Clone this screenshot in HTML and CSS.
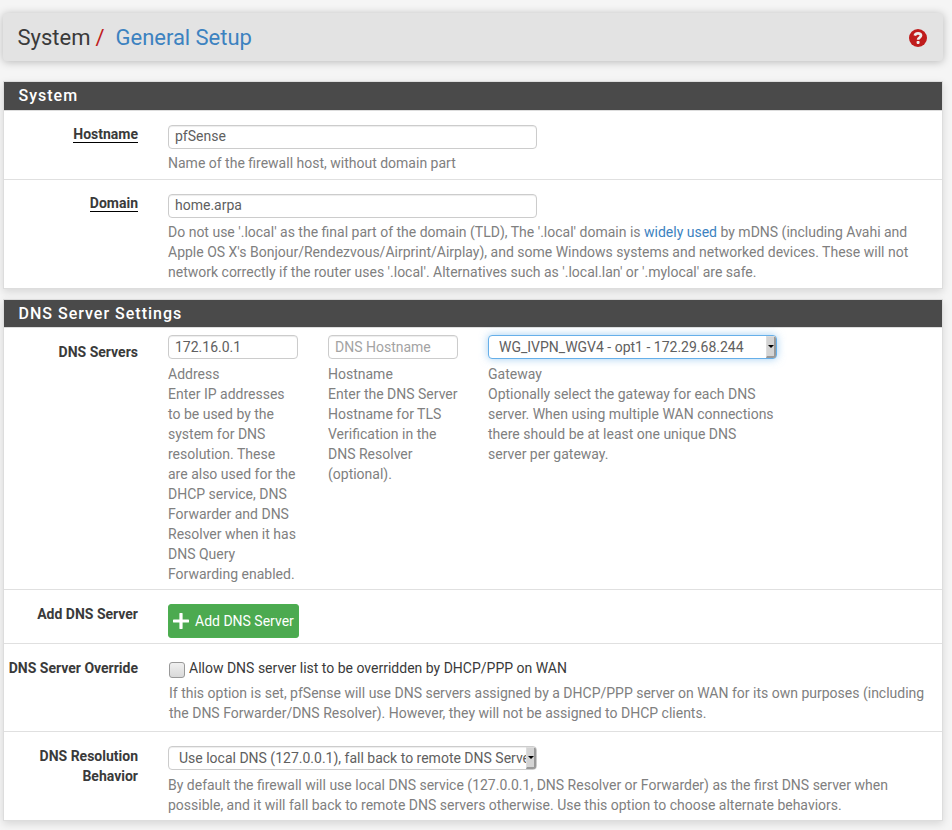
FILE: index.html
```html
<!DOCTYPE html>
<html lang="en">
<head>
<meta charset="utf-8">
<title>System: General Setup</title>
<link rel="stylesheet" href="styles.css">
</head>
<body>
<header class="page-header">
  <h1 class="breadcrumb"><span>System</span><span class="slash">/</span><a href="#">General Setup</a></h1>
  <a class="help-icon" href="#" aria-label="Help">
    <svg width="18" height="18" viewBox="0 0 18 18"><circle cx="9" cy="9" r="9" fill="#c01c1c"/><path d="M5.800 6.600C6.300 5 7.300 4.300 9 4.300c1.800 0 3 .9 3 2.300 0 2-2.900 1.900-2.900 4.100" fill="none" stroke="#eee" stroke-width="2.700"/><rect x="7.600" y="11.900" width="3" height="3" rx=".8" fill="#eee"/></svg>
  </a>
</header>

<section class="panel">
  <h2 class="panel-heading">System</h2>
  <div class="row row-host">
    <label class="label"><span class="required">Hostname</span></label>
    <div class="field">
      <div class="control wide raised">pfSense</div>
      <p class="help">Name of the firewall host, without domain part</p>
    </div>
  </div>
  <div class="row row-domain">
    <label class="label"><span class="required">Domain</span></label>
    <div class="field">
      <div class="control wide raised">home.arpa</div>
      <p class="help">Do not use '.local' as the final part of the domain (TLD), The '.local' domain is <a href="#">widely used</a> by mDNS (including Avahi and<br>Apple OS X's Bonjour/Rendezvous/Airprint/Airplay), and some Windows systems and networked devices. These will not<br>network correctly if the router uses '.local'. Alternatives such as '.local.lan' or '.mylocal' are safe.</p>
    </div>
  </div>
</section>

<section class="panel">
  <h2 class="panel-heading short">DNS Server Settings</h2>
  <div class="row row-servers">
    <label class="label">DNS Servers</label>
    <div class="field columns">
      <div>
        <div class="control">172.16.0.1</div>
        <p class="help">Address<br>Enter IP addresses<br>to be used by the<br>system for DNS<br>resolution. These<br>are also used for the<br>DHCP service, DNS<br>Forwarder and DNS<br>Resolver when it has<br>DNS Query<br>Forwarding enabled.</p>
      </div>
      <div>
        <div class="control placeholder">DNS Hostname</div>
        <p class="help">Hostname<br>Enter the DNS Server<br>Hostname for TLS<br>Verification in the<br>DNS Resolver<br>(optional).</p>
      </div>
      <div>
        <div class="control select focused"><span class="value">WG_IVPN_WGV4 - opt1 - 172.29.68.244</span><span class="arrow"></span></div>
        <p class="help">Gateway<br>Optionally select the gateway for each DNS<br>server. When using multiple WAN connections<br>there should be at least one unique DNS<br>server per gateway.</p>
      </div>
    </div>
  </div>
  <div class="row row-add">
    <label class="label">Add DNS Server</label>
    <div class="field">
      <button class="add-button" type="button"><svg width="16" height="16" viewBox="0 0 16 16"><path d="M8 1v14M1 8h14" stroke="#fff" stroke-width="3.200" stroke-linecap="round"/></svg><span>Add DNS Server</span></button>
    </div>
  </div>
  <div class="row row-override">
    <label class="label">DNS Server Override</label>
    <div class="field">
      <div class="check"><span class="box"></span><span>Allow DNS server list to be overridden by DHCP/PPP on WAN</span></div>
      <p class="help">If this option is set, pfSense will use DNS servers assigned by a DHCP/PPP server on WAN for its own purposes (including<br>the DNS Forwarder/DNS Resolver). However, they will not be assigned to DHCP clients.</p>
    </div>
  </div>
  <div class="row row-resolution">
    <label class="label">DNS Resolution<br>Behavior</label>
    <div class="field">
      <div class="control wide select"><span class="value">Use local DNS (127.0.0.1), fall back to remote DNS Serve</span><span class="arrow"></span></div>
      <p class="help">By default the firewall will use local DNS service (127.0.0.1, DNS Resolver or Forwarder) as the first DNS server when<br>possible, and it will fall back to remote DNS servers otherwise. Use this option to choose alternate behaviors.</p>
    </div>
  </div>
</section>
</body>
</html>
```
FILE: styles.css
```css
* { box-sizing: border-box; }

body {
  margin: 0;
  padding: 13px 9px 0 3px;
  height: 830px;
  overflow: hidden;
  background: #f5f5f5;
  color: #3a3a3a;
  font: 14px/20px Roboto, sans-serif;
}

a { color: #3c82c0; text-decoration: none; }

.page-header {
  display: flex;
  align-items: center;
  justify-content: space-between;
  height: 48px;
  margin-bottom: 20px;
  padding: 0 16px 0 14.5px;
  border-radius: 4px;
  background: #e3e3e3;
  box-shadow: 0 1px 8px rgba(0, 0, 0, .25);
}

.breadcrumb {
  display: flex;
  margin: 2px 0 0;
  font-size: 22px;
  font-weight: 400;
  line-height: 26px;
}

.breadcrumb a { letter-spacing: -.03px; }
.slash { margin: 0 11px 0 5px; color: #c01c1c; }
.help-icon { height: 18px; margin-top: 2px; }
.help-icon svg { display: block; }

.panel {
  width: 940px;
  margin-bottom: 10px;
  border: 1px solid #ddd;
  background: #fff;
  box-shadow: 0 3px 8px rgba(0, 0, 0, .12);
}

.panel-heading {
  height: 29px;
  margin: 0;
  padding-left: 14.5px;
  border-bottom: 1px solid #ddd;
  background: #4a4a4a;
  color: #fff;
  font-size: 16px;
  font-weight: 500;
  letter-spacing: 1px;
  line-height: 27px;
}

.panel-heading.short { height: 28px; }

.row {
  display: grid;
  grid-template-columns: 134px 1fr;
  column-gap: 30px;
  padding-top: 14px;
}

.row + .row { border-top: 1px solid #e0e0e0; }
.row-host { height: 68px; }
.row-domain { height: 109px; }
.row-servers { height: 261px; padding-top: 7px; }
.row-add { height: 54px; }
.row-override { height: 88px; }
.row-resolution { height: 89px; }

.label {
  margin-top: -1px;
  text-align: right;
  font-weight: 700;
  white-space: nowrap;
}

.row-servers .label { margin-top: 7px; }
.row-add .label, .row-override .label, .row-resolution .label { margin-top: 0; }
.required {
  display: inline-block;
  height: 19px;
  border-bottom: 1px solid #000;
}

.control {
  height: 24px;
  padding: 0 6px;
  border: 1px solid #ccc;
  border-radius: 4px;
  background: #fff;
  box-shadow: inset 0 1px 1px rgba(0, 0, 0, .075);
  color: #606060;
  line-height: 22px;
  white-space: nowrap;
}

.wide { width: 369px; }
.raised { line-height: 20px; }
.placeholder { color: #a3a3a3; }

.help {
  margin: 4px 0 0;
  color: #808080;
  white-space: nowrap;
}

.columns {
  display: grid;
  grid-template-columns: 130px 130px 289px;
  column-gap: 30px;
}

.columns .help { margin-top: 5px; }

.select {
  display: flex;
  padding: 0 0 0 10px;
  overflow: hidden;
}

.value { flex: 1; min-width: 0; overflow: hidden; }

.arrow {
  display: flex;
  align-items: center;
  justify-content: center;
  width: 10px;
  border: 1px solid #ddd;
  border-right: 2px solid #999;
  border-bottom: 2px solid #999;
  background: #d4d4d4;
}

.arrow::before {
  content: "";
  border: 3px solid transparent;
  border-top-color: #000;
  border-bottom: 0;
}

.focused {
  border-color: #66afe9;
  box-shadow: 0 0 8px rgba(102, 175, 233, .6);
}

.add-button {
  display: flex;
  align-items: center;
  gap: 6px;
  width: 131px;
  height: 34px;
  padding: 0 0 0 4px;
  border: 1px solid #4caf50;
  border-radius: 3px;
  background: #4caa50;
  color: #fff;
  font: inherit;
  white-space: nowrap;
}

.add-button svg { flex: none; }

.check { display: flex; gap: 4px; }

.box {
  width: 16px;
  height: 16px;
  margin: 4px 0 0 1px;
  border: 1px solid #999;
  border-radius: 3px;
  background: linear-gradient(#f0f0f0, #d9d9d9);
}

.row-override .help { margin: 5px 0 0 1px; }
.row-resolution .help { margin-top: 5px; }
```
